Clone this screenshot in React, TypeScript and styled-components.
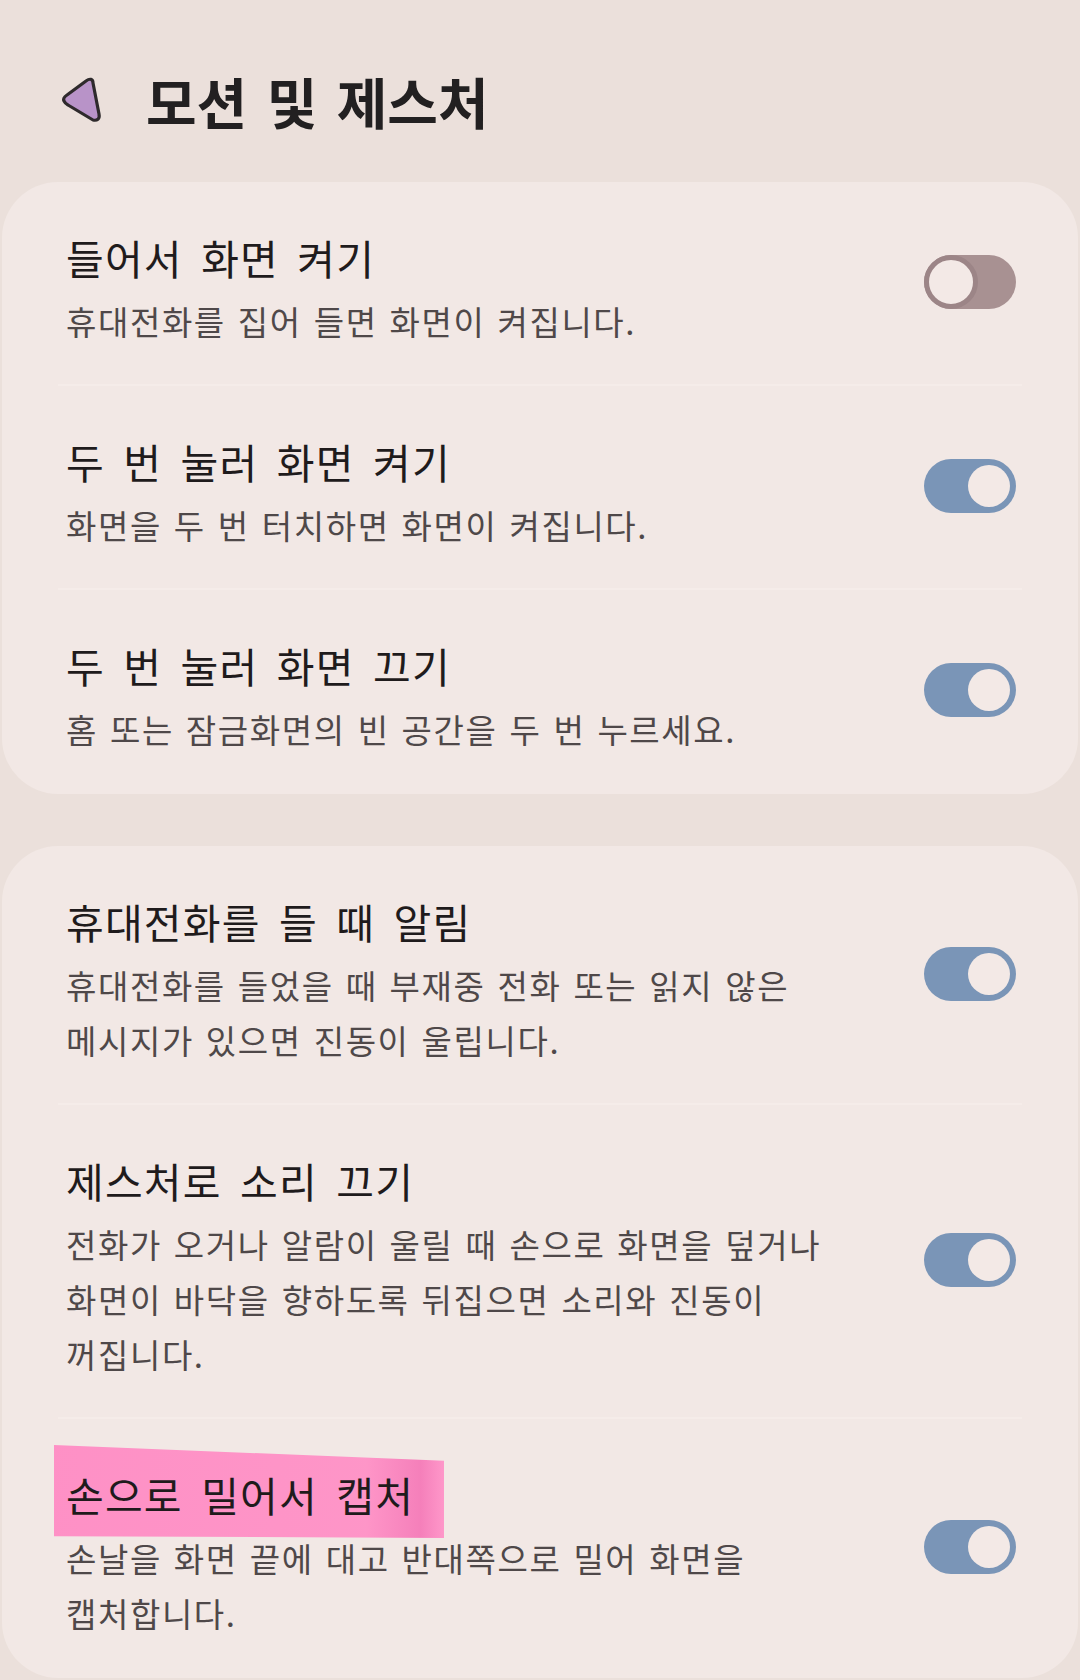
import styled, { createGlobalStyle } from "styled-components";

const GlobalStyle = createGlobalStyle`
  html, body {
    margin: 0;
    padding: 0;
    background: #ebe0db;
  }
  body {
    font-family: "Noto Sans CJK KR", "Noto Sans", sans-serif;
    -webkit-font-smoothing: antialiased;
    word-break: keep-all;
  }
`;

const Screen = styled.div`
  width: 1080px;
  min-height: 1680px;
  display: flex;
  flex-direction: column;
  gap: 52px;
  overflow: hidden;
`;

const Header = styled.header`
  height: 182px;
  box-sizing: border-box;
  padding: 18px 0 0 60px;
  display: flex;
  align-items: center;
  gap: 40px;
  margin-bottom: -52px;
`;

const BackButton = styled.button`
  width: 46px;
  height: 48px;
  padding: 0;
  border: 0;
  background: none;
  display: flex;
`;

const PageTitle = styled.h1`
  margin: 0;
  font-size: 55px;
  font-weight: 700;
  line-height: 1;
  color: #222021;
  word-spacing: 7px;
`;

const Card = styled.section`
  margin: 0 2px;
  background: #f2e8e5;
  border-radius: 56px;
  display: flex;
  flex-direction: column;
`;

const Row = styled.div<{ $divider?: boolean }>`
  position: relative;
  display: flex;
  align-items: center;
  gap: 24px;
  padding: 46px 62px 37px 64px;

  &::after {
    content: "";
    display: ${({ $divider }) => ($divider ? "block" : "none")};
    position: absolute;
    left: 56px;
    right: 56px;
    bottom: 0;
    height: 2px;
    background: #f5ece9;
  }
`;

const TextBlock = styled.div`
  flex: 1;
  display: flex;
  flex-direction: column;
  gap: 8px;
`;

const Title = styled.div`
  position: relative;
  align-self: flex-start;
  font-size: 41px;
  line-height: 58px;
  letter-spacing: 1.2px;
  color: #1f1b1c;
  word-spacing: 8px;
`;

const TitleText = styled.span`
  position: relative;
  z-index: 1;
`;

const Marker = styled.span`
  position: absolute;
  left: -12px;
  right: -30px;
  top: -20px;
  bottom: -15px;
  background: linear-gradient(90deg, #ff8cc4 0%, #ff91c6 80%, #f57ab8 94%, #ff93c8 100%);
  clip-path: polygon(0 0, 100% 17%, 100% 100%, 0 98%);
  opacity: 0.95;
`;

const Summary = styled.div`
  font-size: 33px;
  line-height: 55px;
  letter-spacing: 1.6px;
  color: #4f4849;
  word-spacing: 3px;
  max-width: 780px;
`;

const Track = styled.div<{ $on: boolean }>`
  flex: none;
  width: 92px;
  height: 54px;
  margin-top: -13px;
  box-sizing: border-box;
  border-radius: 27px;
  background: ${({ $on }) => ($on ? "#7a95b7" : "#a89192")};
  display: flex;
  justify-content: ${({ $on }) => ($on ? "flex-end" : "flex-start")};
  align-items: center;
  padding: ${({ $on }) => ($on ? "0 6px" : "0")};
`;

const Knob = styled.div<{ $on: boolean }>`
  box-sizing: border-box;
  width: ${({ $on }) => ($on ? "42px" : "54px")};
  height: ${({ $on }) => ($on ? "42px" : "54px")};
  border-radius: 50%;
  background: #f3e9e6;
  border: ${({ $on }) => ($on ? "none" : "5px solid #9c8587")};
`;

type Setting = {
  title: string;
  summary: string;
  on: boolean;
  marked?: boolean;
};

const motionGroup: Setting[] = [
  { title: "들어서 화면 켜기", summary: "휴대전화를 집어 들면 화면이 켜집니다.", on: false },
  { title: "두 번 눌러 화면 켜기", summary: "화면을 두 번 터치하면 화면이 켜집니다.", on: true },
  { title: "두 번 눌러 화면 끄기", summary: "홈 또는 잠금화면의 빈 공간을 두 번 누르세요.", on: true },
];

const gestureGroup: Setting[] = [
  {
    title: "휴대전화를 들 때 알림",
    summary: "휴대전화를 들었을 때 부재중 전화 또는 읽지 않은 메시지가 있으면 진동이 울립니다.",
    on: true,
  },
  {
    title: "제스처로 소리 끄기",
    summary:
      "전화가 오거나 알람이 울릴 때 손으로 화면을 덮거나 화면이 바닥을 향하도록 뒤집으면 소리와 진동이 꺼집니다.",
    on: true,
  },
  {
    title: "손으로 밀어서 캡처",
    summary: "손날을 화면 끝에 대고 반대쪽으로 밀어 화면을 캡처합니다.",
    on: true,
    marked: true,
  },
];

function BackIcon() {
  return (
    <svg width="46" height="48" viewBox="0 0 46 48">
      <path
        d="M4 25 C3 23 4 21 7 19 L26 5 C30 2 33 3 33 7 L39 38 C40 43 37 45 33 44 L8 29 C6 28 5 27 4 25 Z"
        fill="#b893c8"
        stroke="#2e2a2c"
        strokeWidth="3.2"
        strokeLinejoin="round"
      />
    </svg>
  );
}

function Toggle({ on }: { on: boolean }) {
  return (
    <Track $on={on}>
      <Knob $on={on} />
    </Track>
  );
}

function SettingsCard({ items }: { items: Setting[] }) {
  return (
    <Card>
      {items.map((item, i) => (
        <Row key={item.title} $divider={i < items.length - 1}>
          <TextBlock>
            <Title>
              {item.marked && <Marker />}
              <TitleText>{item.title}</TitleText>
            </Title>
            <Summary>{item.summary}</Summary>
          </TextBlock>
          <Toggle on={item.on} />
        </Row>
      ))}
    </Card>
  );
}

export default function App() {
  return (
    <>
      <GlobalStyle />
      <Screen>
        <Header>
          <BackButton aria-label="뒤로">
            <BackIcon />
          </BackButton>
          <PageTitle>모션 및 제스처</PageTitle>
        </Header>
        <SettingsCard items={motionGroup} />
        <SettingsCard items={gestureGroup} />
      </Screen>
    </>
  );
}
